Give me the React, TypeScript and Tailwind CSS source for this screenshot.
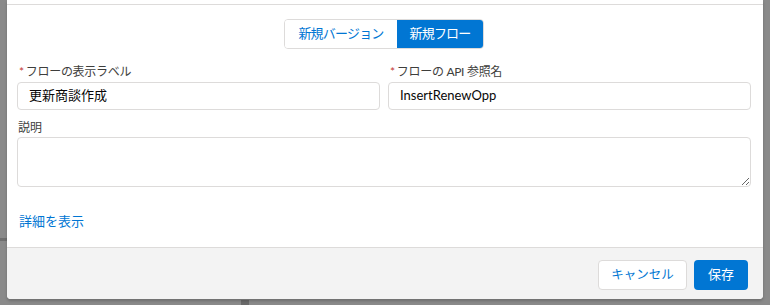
const font = "font-['Lato','Noto_Sans_CJK_JP',sans-serif]"

const Field = ({ label, value }: { label: string; value: string }) => {
  return (
    <div className="flex flex-col">
      <label className="h-[16px] mb-[2px] text-[12px] leading-[16px] text-[#3e3e3c] pl-[2px] tracking-[-0.3px]">
        <abbr className="text-[#c23934] no-underline mr-[2px]">*</abbr>
        {label}
      </label>
      <div className="h-[28px] rounded-[4px] border border-[#dddbda] bg-white px-[11px] flex items-center text-[13px] text-[#080707]">
        {value}
      </div>
    </div>
  )
}

export default function App() {
  return (
    <div className={`relative w-[770px] h-[305px] bg-[#8a8a8a] overflow-hidden ${font}`}>
      <div className="absolute left-0 top-[238px] w-[7px] h-[3px] bg-[#6f6f6f]" />
      <div className="absolute left-[241px] top-[300px] w-[8px] h-[5px] bg-[#6a6a6a]" />
      <div className="relative ml-[7px] w-[756px] h-[299px] bg-white rounded-b-[4px] shadow-[0_2px_3px_rgba(0,0,0,0.2)] flex flex-col overflow-hidden">
        <div className="h-[5px] border-b border-[#dddbda] shrink-0" />
        <div className="flex-1 pl-[10px] pr-[12px] pt-[14px]">
          <div className="flex justify-center">
            <div className="flex h-[30px] rounded-[4px] border border-[#dddbda] overflow-hidden text-[13px] tracking-[-0.8px] whitespace-nowrap">
              <button className="w-[112px] bg-white text-[#0176d3] flex items-center justify-center">新規バージョン</button>
              <button className="w-[86px] bg-[#0176d3] text-white flex items-center justify-center">新規フロー</button>
            </div>
          </div>
          <div className="mt-[15px] grid grid-cols-2 gap-x-[8px]">
            <Field label="フローの表示ラベル" value="更新商談作成" />
            <Field label="フローの API 参照名" value="InsertRenewOpp" />
          </div>
          <div className="mt-[10px] h-[16px] mb-[1px] text-[12px] leading-[16px] text-[#3e3e3c] pl-[1px]">説明</div>
          <textarea
            className="block w-full h-[50px] rounded-[4px] border border-[#dddbda] resize-y outline-none"
            defaultValue=""
          />
          <a className="block mt-[24px] pl-[2px] text-[13px] leading-[20px] text-[#0176d3]">詳細を表示</a>
        </div>
        <div className="h-[52px] shrink-0 border-t border-[#dddbda] bg-[#f3f3f3] flex justify-end items-start pt-[12px] pr-[15px] gap-[7px]">
          <button className="w-[89px] h-[30px] rounded-[4px] border border-[#dddbda] bg-white text-[12.5px] text-[#0176d3]">キャンセル</button>
          <button className="w-[54px] h-[30px] rounded-[4px] bg-[#0176d3] text-[13px] text-white">保存</button>
        </div>
      </div>
    </div>
  )
}
